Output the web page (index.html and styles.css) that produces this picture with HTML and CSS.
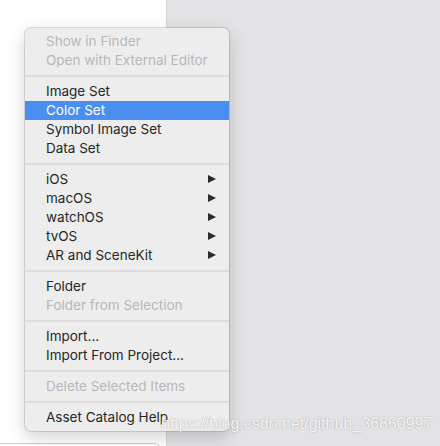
FILE: index.html
```html
<!DOCTYPE html>
<html lang="en">
<head>
    <meta charset="UTF-8">
    <title>Asset Catalog Menu</title>
    <link rel="stylesheet" href="styles.css">
</head>
<body>
    <div class="workspace">
        <div class="sidebar">
            <div class="sidebar-footer"></div>
        </div>
        <div class="canvas"></div>
    </div>

    <ul class="menu">
        <li class="item disabled">Show in Finder</li>
        <li class="item disabled">Open with External Editor</li>
        <li class="sep"></li>
        <li class="item">Image Set</li>
        <li class="item active">Color Set</li>
        <li class="item">Symbol Image Set</li>
        <li class="item">Data Set</li>
        <li class="sep"></li>
        <li class="item sub">iOS</li>
        <li class="item sub">macOS</li>
        <li class="item sub">watchOS</li>
        <li class="item sub">tvOS</li>
        <li class="item sub">AR and SceneKit</li>
        <li class="sep"></li>
        <li class="item">Folder</li>
        <li class="item disabled">Folder from Selection</li>
        <li class="sep"></li>
        <li class="item">Import...</li>
        <li class="item">Import From Project...</li>
        <li class="sep"></li>
        <li class="item disabled">Delete Selected Items</li>
        <li class="sep"></li>
        <li class="item">Asset Catalog Help</li>
    </ul>

    <div class="watermark">https://blog.csdn.net/github_36850997</div>
</body>
</html>
```

FILE: styles.css
```css
:root {
    --menu-bg: #ededed;
    --text: #262626;
    --muted: #b8b8b8;
    --accent: #4a8ff0;
    --canvas: #e3e3e6;
}

* {
    box-sizing: border-box;
    margin: 0;
    padding: 0;
}

body {
    width: 440px;
    height: 446px;
    overflow: hidden;
    position: relative;
    font-family: Inter, "Liberation Sans", sans-serif;
    background: var(--canvas);
}

.workspace {
    display: flex;
    height: 100%;
}

.sidebar {
    width: 167px;
    background: #fff;
    border-right: 1px solid #d6d6d8;
    position: relative;
}

.sidebar-footer {
    position: absolute;
    left: -6px;
    right: 6px;
    bottom: -10px;
    height: 13px;
    border: 1px solid #cfcfcf;
    border-radius: 5px;
}

.canvas {
    flex: 1;
}

.menu {
    position: absolute;
    left: 25px;
    top: 28px;
    width: 204px;
    list-style: none;
    padding: 4px 0;
    background: var(--menu-bg);
    border-radius: 6px;
    box-shadow: 0 0 0 1px rgba(0, 0, 0, 0.12), 0 6px 18px rgba(0, 0, 0, 0.18);
    font-size: 13.5px;
    color: var(--text);
}

.item {
    height: 19px;
    line-height: 19px;
    padding-left: 21px;
    position: relative;
    white-space: nowrap;
}

.item.disabled {
    color: var(--muted);
}

.item.active {
    background: var(--accent);
    color: #fff;
}

.item.sub::after {
    content: "";
    position: absolute;
    right: 13px;
    top: 5px;
    border-left: 8px solid #2a2a2a;
    border-top: 4.5px solid transparent;
    border-bottom: 4.5px solid transparent;
}

.sep {
    height: 12px;
    position: relative;
}

.sep::before {
    content: "";
    position: absolute;
    left: 0;
    right: 0;
    top: 5px;
    height: 2px;
    background: #dcdcdc;
}

.watermark {
    position: absolute;
    left: 161px;
    top: 415px;
    font-family: "Liberation Sans", sans-serif;
    font-size: 16px;
    color: rgba(255, 255, 255, 0.9);
    text-shadow: 0 0 1px rgba(120, 120, 120, 0.55), 0 0 2px rgba(160, 160, 160, 0.4);
    white-space: nowrap;
}
```
